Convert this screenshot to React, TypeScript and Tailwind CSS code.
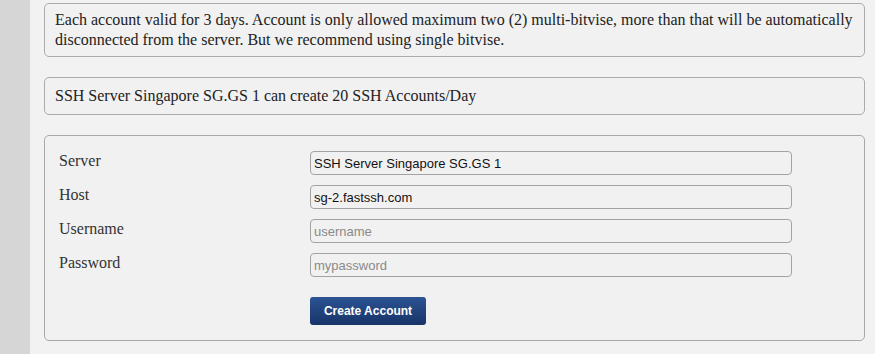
const fields = [
  { label: 'Server', value: 'SSH Server Singapore SG.GS 1', placeholder: '' },
  { label: 'Host', value: 'sg-2.fastssh.com', placeholder: '' },
  { label: 'Username', value: '', placeholder: 'username' },
  { label: 'Password', value: '', placeholder: 'mypassword' },
];

export default function App() {
  return (
    <div className="flex h-[354px] w-[875px] overflow-hidden bg-[#f2f2f2] font-['Liberation_Serif',serif] text-[16px] text-[#222]">
      <div className="w-[30px] shrink-0 bg-[#d6d6d6]" />
      <div className="flex flex-1 flex-col gap-[20px] pl-[14px] pr-[10px] pt-[3px]">
        <div className="rounded-[5px] border border-[#ababab] bg-[#f1f1f1] px-[10px] py-[6px] leading-[20px]">
          Each account valid for 3 days. Account is only allowed maximum two (2) multi-bitvise, more than that will be automatically
          disconnected from the server. But we recommend using single bitvise.
        </div>
        <div className="rounded-[5px] border border-[#ababab] bg-[#f1f1f1] px-[10px] py-[8px] leading-[20px]">
          SSH Server Singapore SG.GS 1 can create 20 SSH Accounts/Day
        </div>
        <div className="h-[206px] rounded-[5px] border border-[#a8a8a8] bg-[#f1f1f1] pl-[14px] pt-[15px]">
          <div className="flex flex-col gap-[10px]">
            {fields.map((f) => (
              <div key={f.label} className="flex items-center">
                <span className="w-[251px] pb-[5px] leading-[18px] text-[#333]">{f.label}</span>
                <input
                  readOnly
                  value={f.value}
                  placeholder={f.placeholder}
                  className="h-[24px] w-[482px] rounded-[4px] border border-[#a3a3a3] bg-[#f1f1f1] px-[3px] font-['Liberation_Sans',sans-serif] text-[13px] text-[#111] placeholder:text-[#8a8a8a] focus:outline-none"
                />
              </div>
            ))}
          </div>
          <button
            type="button"
            className="ml-[251px] mt-[20px] h-[28px] w-[116px] rounded-[3px] bg-gradient-to-b from-[#2c5394] to-[#173468] font-['Liberation_Sans',sans-serif] text-[12px] font-bold text-white"
          >
            Create Account
          </button>
        </div>
      </div>
    </div>
  );
}
